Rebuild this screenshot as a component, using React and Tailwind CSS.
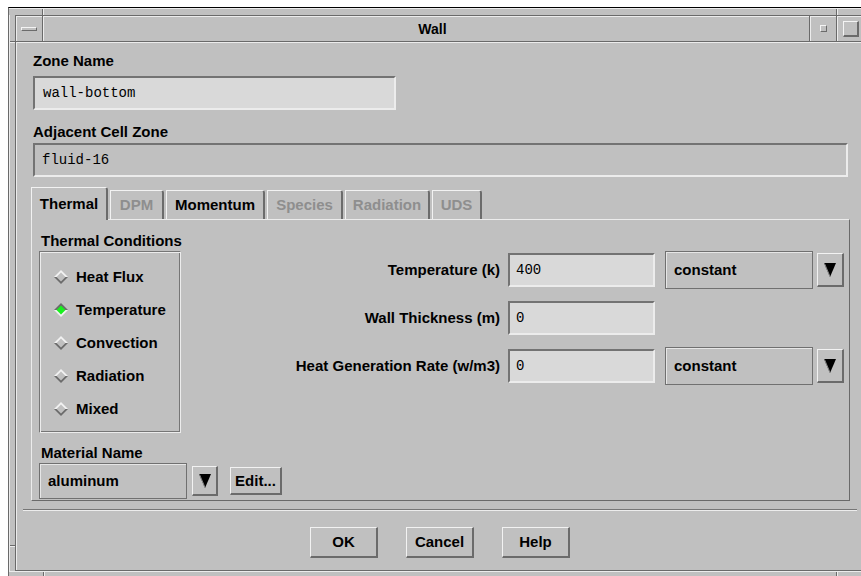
import React from 'react';

// Motif-style bevels
const sunken =
  'border-2 border-t-[#737373] border-l-[#737373] border-b-[#ececec] border-r-[#ececec]';
const raised =
  'border-t border-l border-b-2 border-r-2 border-t-[#f2f2f2] border-l-[#f2f2f2] border-b-[#6b6b6b] border-r-[#6b6b6b]';
const etched =
  'border border-t-[#767676] border-l-[#767676] border-b-[#ececec] border-r-[#ececec] shadow-[inset_1px_1px_0_#ececec,inset_-1px_-1px_0_#767676]';
const option =
  'border border-[#707070] shadow-[inset_1px_1px_0_#e6e6e6]';

const Diamond = ({ on }) => (
  <svg width="14" height="14" viewBox="0 0 14 14" className="shrink-0">
    <polygon points="0,7 7,0 14,7" fill={on ? '#6b6b6b' : '#f2f2f2'} />
    <polygon points="0,7 7,14 14,7" fill={on ? '#f2f2f2' : '#6b6b6b'} />
    <polygon points="7,2.5 11.5,7 7,11.5 2.5,7" fill={on ? '#19f01e' : '#c0c0c0'} />
  </svg>
);

const DownArrow = () => (
  <svg width="12" height="14" viewBox="0 0 12 14">
    <polygon points="0,0 12,0 6,14" fill="#000" />
    <polyline points="0.5,0.5 6,13.5" stroke="#8a8a8a" fill="none" />
  </svg>
);

const ArrowButton = ({ className }) => (
  <div className={`flex shrink-0 items-center justify-center ${raised} ${className}`}>
    <DownArrow />
  </div>
);

const Label = ({ children, className = '' }) => (
  <div className={`h-[18px] whitespace-nowrap ${className}`}>{children}</div>
);

const tabs = [
  { name: 'Thermal', w: 'w-[77px]', active: true },
  { name: 'DPM', w: 'w-[54px]' },
  { name: 'Momentum', w: 'w-[99px]', enabled: true },
  { name: 'Species', w: 'w-[76px]' },
  { name: 'Radiation', w: 'w-[85px]' },
  { name: 'UDS', w: 'w-[50px]' },
];

const conditions = ['Heat Flux', 'Temperature', 'Convection', 'Radiation', 'Mixed'];

const FieldRow = ({ label, value, menu }) => (
  <div className="flex h-[38px] items-center justify-end">
    <Label className="text-right">{label}</Label>
    <div
      className={`ml-[8px] flex h-[34px] w-[147px] items-center bg-[#d9d9d9] pl-[6px] font-['Liberation_Mono',monospace] text-[14px] font-normal ${sunken}`}
    >
      {value}
    </div>
    {menu ? (
      <>
        <div className={`ml-[10px] flex h-[38px] w-[148px] items-center pl-[8px] ${option}`}>
          {menu}
        </div>
        <ArrowButton className="ml-[4px] h-[34px] w-[27px]" />
      </>
    ) : (
      <div className="w-[189px]" />
    )}
  </div>
);

export default function App() {
  return (
    <div className="h-[576px] w-[861px] overflow-hidden bg-white pl-[8px] pt-[7px] font-['Liberation_Sans',Arial,sans-serif] text-[15px] leading-[18px] font-bold text-black">
      <div className="flex h-[571px] w-[865px] flex-col border-l border-t border-l-[#6a6a6a] border-t-black bg-[#c0c0c0]">
        {/* top resize band */}
        <div className="flex h-[7px] shrink-0 border-t border-t-[#ececec]">
          <div className="w-[34px] border-r border-r-[#6a6a6a]" />
          <div className="w-[794px] border-r border-l border-r-[#6a6a6a] border-l-[#ececec]" />
          <div className="flex-1 border-l border-l-[#ececec]" />
        </div>

        <div className="flex h-[556px] shrink-0">
          {/* left resize band */}
          <div className="flex w-[6px] shrink-0 flex-col border-l border-l-[#ececec]">
            <div className="h-[27px] border-b border-b-[#6a6a6a]" />
            <div className="h-[504px] border-b border-t border-b-[#6a6a6a] border-t-[#ececec]" />
            <div className="flex-1 border-t border-t-[#ececec]" />
          </div>

          <div className="flex w-[850px] shrink-0 flex-col border border-[#6a6a6a]">
            {/* title bar */}
            <div className="flex h-[26px] shrink-0 border-b border-b-[#6a6a6a]">
              <div className="flex w-[27px] items-center justify-center border-r border-r-[#6a6a6a] shadow-[inset_1px_1px_0_#ececec]">
                <div className="h-[4px] w-[16px] border-t border-l border-b border-r border-t-[#f4f4f4] border-l-[#f4f4f4] border-b-[#6b6b6b] border-r-[#6b6b6b]" />
              </div>
              <div className="flex w-[767px] items-center justify-center border-r border-r-[#6a6a6a] pl-[13px] text-[14px] shadow-[inset_1px_1px_0_#ececec]">
                Wall
              </div>
              <div className="flex w-[27px] items-center justify-center border-r border-r-[#6a6a6a] shadow-[inset_1px_1px_0_#ececec]">
                <div className="h-[7px] w-[7px] border-t border-l border-b border-r border-t-[#f4f4f4] border-l-[#f4f4f4] border-b-[#6b6b6b] border-r-[#6b6b6b]" />
              </div>
              <div className="flex w-[27px] items-center justify-center shadow-[inset_1px_1px_0_#ececec]">
                <div className="h-[16px] w-[16px] border-t border-l border-b-2 border-r-2 border-t-[#f4f4f4] border-l-[#f4f4f4] border-b-[#6b6b6b] border-r-[#6b6b6b]" />
              </div>
            </div>

            {/* dialog body */}
            <div className="flex flex-1 flex-col shadow-[inset_1px_1px_0_#ececec]">
              <Label className="ml-[17px] mt-[10px]">Zone Name</Label>
              <div
                className={`ml-[17px] mt-[6px] flex h-[34px] w-[363px] items-center bg-[#d9d9d9] pl-[8px] font-['Liberation_Mono',monospace] text-[14px] font-normal ${sunken}`}
              >
                wall-bottom
              </div>

              <Label className="ml-[17px] mt-[13px]">Adjacent Cell Zone</Label>
              <div
                className={`ml-[17px] mt-[2px] flex h-[34px] w-[815px] items-center pl-[7px] font-['Liberation_Mono',monospace] text-[14px] font-normal ${sunken}`}
              >
                fluid-16
              </div>

              {/* tabs */}
              <div className="ml-[15px] mt-[10px] flex h-[32px] items-end gap-[2px]">
                {tabs.map(t => (
                  <div
                    key={t.name}
                    className={`flex items-center justify-center rounded-tr-[3px] border-t border-l border-r-2 border-t-[#f2f2f2] border-l-[#f2f2f2] border-r-[#6b6b6b] bg-[#c0c0c0] ${t.w} ${
                      t.active ? 'relative z-10 -mb-px h-[33px]' : 'h-[29px]'
                    } ${t.active || t.enabled ? 'text-black' : 'text-[#8e8e8e]'}`}
                  >
                    {t.name}
                  </div>
                ))}
              </div>

              {/* Thermal panel */}
              <div className="ml-[15px] flex h-[282px] w-[819px] border border-t-[#ececec] border-l-[#ececec] border-r-[#6a6a6a] border-b-[#6a6a6a]">
                <div className="flex w-[260px] shrink-0 flex-col pl-[7px] pt-[12px]">
                  <Label className="ml-[2px]">Thermal Conditions</Label>
                  <div className={`mt-[1px] flex h-[182px] w-[142px] flex-col pt-[8px] ${etched}`}>
                    {conditions.map(c => (
                      <div key={c} className="flex h-[33px] items-center pl-[14px]">
                        <Diamond on={c === 'Temperature'} />
                        <span className="ml-[8px]">{c}</span>
                      </div>
                    ))}
                  </div>

                  <Label className="ml-[2px] mt-[11px]">Material Name</Label>
                  <div className="mt-[1px] flex items-center">
                    <div className={`flex h-[36px] w-[148px] items-center pl-[8px] ${option}`}>
                      aluminum
                    </div>
                    <ArrowButton className="ml-[5px] h-[30px] w-[26px]" />
                    <div
                      className={`ml-[12px] flex h-[28px] w-[52px] items-center justify-center ${raised}`}
                    >
                      Edit...
                    </div>
                  </div>
                </div>

                <div className="flex flex-1 flex-col gap-[10px] pr-[5px] pt-[31px]">
                  <FieldRow label="Temperature (k)" value="400" menu="constant" />
                  <FieldRow label="Wall Thickness (m)" value="0" />
                  <FieldRow label="Heat Generation Rate (w/m3)" value="0" menu="constant" />
                </div>
              </div>

              <div className="mx-[7px] mt-[8px] h-[2px] border-t border-b border-t-[#767676] border-b-[#ececec]" />

              <div className="mt-[16px] flex justify-center gap-[28px]">
                {['OK', 'Cancel', 'Help'].map(b => (
                  <div
                    key={b}
                    className={`flex h-[31px] w-[68px] items-center justify-center ${raised}`}
                  >
                    {b}
                  </div>
                ))}
              </div>
            </div>
          </div>

          {/* right resize band */}
          <div className="w-[6px] shrink-0 border-l border-l-[#ececec]" />
        </div>

        {/* bottom resize band */}
        <div className="flex h-[7px] shrink-0 border-t border-t-[#ececec]">
          <div className="w-[35px] border-r border-r-[#6a6a6a]" />
          <div className="w-[793px] border-r border-l border-r-[#6a6a6a] border-l-[#ececec]" />
          <div className="flex-1 border-l border-l-[#ececec]" />
        </div>
      </div>
    </div>
  );
}
